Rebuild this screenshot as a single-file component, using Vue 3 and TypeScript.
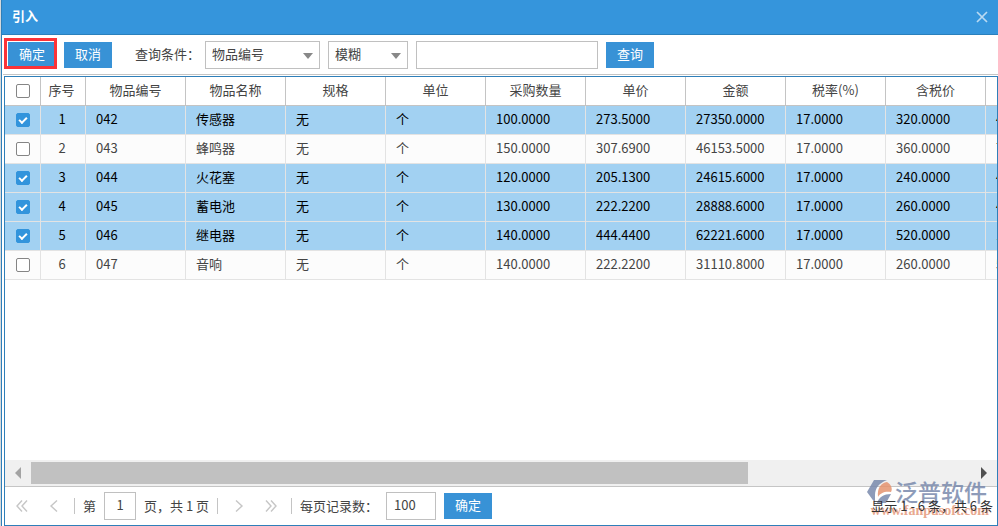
<script setup lang="ts">
import { computed, ref } from 'vue'

interface Item {
  code: string
  name: string
  spec: string
  unit: string
  qty: number
  price: number
  amount: number
  rate: number
  taxed: number
  checked: boolean
}

const make = (
  code: string, name: string, qty: number, price: number,
  amount: number, taxed: number, checked: boolean,
): Item => ({ code, name, spec: '无', unit: '个', qty, price, amount, rate: 17, taxed, checked })

const items = ref<Item[]>([
  make('042', '传感器', 100, 273.5, 27350, 320, true),
  make('043', '蜂鸣器', 150, 307.69, 46153.5, 360, false),
  make('044', '火花塞', 120, 205.13, 24615.6, 240, true),
  make('045', '蓄电池', 130, 222.22, 28888.6, 260, true),
  make('046', '继电器', 140, 444.44, 62221.6, 520, true),
  make('047', '音响', 140, 222.22, 31110.8, 260, false),
])

const headings = ['物品编号', '物品名称', '规格', '单位', '采购数量', '单价', '金额', '税率(%)', '含税价']
const field = ref('物品编号')
const mode = ref('模糊')
const keyword = ref('')
const page = ref('1')
const pageSize = ref('100')

const fixed = (n: number): string => n.toFixed(4)
const cells = (i: Item): string[] => [
  i.code, i.name, i.spec, i.unit, fixed(i.qty), fixed(i.price), fixed(i.amount),
  fixed(i.rate), fixed(i.taxed), fixed((i.amount * i.rate) / 100),
]

const all = computed({
  get: () => items.value.every((i) => i.checked),
  set: (v: boolean) => items.value.forEach((i) => { i.checked = v }),
})
</script>

<template>
  <div class="dialog">
    <header class="titlebar">
      <h1>引入</h1>
      <button class="icon close" type="button" aria-label="关闭">
        <svg width="12" height="12" viewBox="0 0 12 12"><path d="M1 1L11 11M11 1L1 11" /></svg>
      </button>
    </header>

    <form class="toolbar" @submit.prevent>
      <button class="btn marked" type="button">确定</button>
      <button class="btn" type="button">取消</button>
      <label class="query-label" for="field">查询条件：</label>
      <span class="select wide">
        <select id="field" v-model="field"><option>物品编号</option><option>物品名称</option></select>
      </span>
      <span class="select">
        <select v-model="mode" aria-label="匹配方式"><option>模糊</option><option>精确</option></select>
      </span>
      <input v-model="keyword" class="box keyword" type="text" aria-label="关键字">
      <button class="btn" type="submit">查询</button>
    </form>

    <main class="panel">
      <div class="grid">
        <table>
          <colgroup>
            <col class="c-check"><col class="c-index"><col v-for="n in 10" :key="n" class="c-data">
          </colgroup>
          <thead>
            <tr>
              <th class="check"><input v-model="all" type="checkbox" aria-label="全选"></th>
              <th class="index">序号</th>
              <th v-for="h in headings" :key="h">{{ h }}</th>
              <th></th>
            </tr>
          </thead>
          <tbody>
            <tr v-for="(item, i) in items" :key="item.code" :class="{ selected: item.checked }">
              <td class="check"><input v-model="item.checked" type="checkbox" :aria-label="item.name"></td>
              <td class="index">{{ i + 1 }}</td>
              <td v-for="(c, k) in cells(item)" :key="k">{{ c }}</td>
            </tr>
          </tbody>
        </table>
      </div>

      <div class="scrollbar">
        <span class="arrow"><svg width="6" height="12" viewBox="0 0 6 12"><path class="dim" d="M6 0V12L0 6Z" /></svg></span>
        <div class="track"><div class="thumb"></div></div>
        <span class="arrow"><svg width="6" height="12" viewBox="0 0 6 12"><path class="dark" d="M0 0V12L6 6Z" /></svg></span>
      </div>

      <footer class="pager">
        <button class="icon nav" type="button" aria-label="首页">
          <svg width="12" height="12" viewBox="0 0 12 12"><path d="M6 0.5L1 6L6 11.5M11 0.5L6 6L11 11.5" /></svg>
        </button>
        <button class="icon nav" type="button" aria-label="上一页">
          <svg width="12" height="12" viewBox="0 0 12 12"><path d="M9 0.5L3 6L9 11.5" /></svg>
        </button>
        <i class="sep"></i>
        <label class="txt" for="page">第</label>
        <input id="page" v-model="page" class="box page" type="text">
        <span class="txt">页，共 1 页</span>
        <i class="sep"></i>
        <button class="icon nav" type="button" aria-label="下一页">
          <svg width="12" height="12" viewBox="0 0 12 12"><path d="M3 0.5L9 6L3 11.5" /></svg>
        </button>
        <button class="icon nav" type="button" aria-label="末页">
          <svg width="12" height="12" viewBox="0 0 12 12"><path d="M1 0.5L6 6L1 11.5M6 0.5L11 6L6 11.5" /></svg>
        </button>
        <i class="sep"></i>
        <label class="txt size-label" for="size">每页记录数：</label>
        <input id="size" v-model="pageSize" class="box size" type="text">
        <button class="btn" type="button">确定</button>
        <span class="summary">显示 1 - 6 条，共 6 条</span>
      </footer>
    </main>

    <div class="watermark">
      <div class="brand">
        <svg width="26" height="24" viewBox="0 0 26 24">
          <path class="slate" d="M7 0H20C12 3 8 8 8 15C8 18 8 20 8 23L0 12Z" />
          <path class="coral" d="M11 17C10 8 14 3 20 2C24 4 26 9 24 12C18 11 13 13 11 17Z" />
          <path class="slate" d="M10 23C12 17 17 14 24 14L19 23Z" />
        </svg>
        <span>泛普软件</span>
      </div>
      <div class="site">www.fanpusoft.com</div>
    </div>
  </div>
</template>

<style>
body { background: #fff; }
</style>

<style scoped>
*, *::after { box-sizing: border-box; }
.dialog {
  position: relative;
  display: flex;
  flex-direction: column;
  height: 100vh;
  padding-left: 1px;
  border-left: 1px solid #d5d9dc;
  box-shadow: inset 1px 0 #2f7fb9;
  overflow: hidden;
  color: #444;
  font: 13px/20px "Noto Sans CJK SC", sans-serif;
}
button, input, select { margin: 0; font: inherit; color: inherit; }
.titlebar {
  display: flex;
  flex: none;
  align-items: center;
  justify-content: space-between;
  height: 35px;
  padding: 0 9px 2px 10px;
  border-bottom: 1px solid #2a80bc;
  background: #3595dc;
}
h1 { margin: 0; color: #fff; font-size: 13px; font-weight: 700; line-height: 20px; }
.icon {
  display: flex;
  align-items: center;
  justify-content: center;
  padding: 0;
  border: 0;
  background: none;
}
.icon path { fill: none; stroke: #c6c6c6; stroke-width: 1.4; }
.close { width: 14px; height: 20px; padding-top: 2px; }
.close path { stroke: #b9daf2; stroke-width: 1.7; }
.toolbar {
  display: flex;
  flex: none;
  align-items: center;
  gap: 8px;
  height: 40px;
  margin-left: 1px;
  padding: 0 5px;
  border-bottom: 1px solid #c5c5c5;
}
.btn {
  position: relative;
  flex: none;
  width: 48px;
  height: 26px;
  padding: 0 0 2px;
  border: 0;
  background: #3892d6;
  color: #fff;
}
.marked::after {
  content: "";
  position: absolute;
  inset: -4px -1px -1px -4px;
  border: 3px solid #fb3338;
}
.query-label { width: 62px; margin-left: 15px; padding-bottom: 2px; white-space: nowrap; }
.select { position: relative; flex: none; width: 80px; height: 28px; }
.wide { width: 115px; }
.select::after {
  content: "";
  position: absolute;
  top: 12px;
  right: 7px;
  border: 5px solid transparent;
  border-top: 6px solid #888;
  border-bottom: 0;
  pointer-events: none;
}
select, .box {
  height: 28px;
  border: 1px solid #c0c0c0;
  border-radius: 0;
  outline: 0;
  background: #fff;
}
select { width: 100%; padding: 0 6px 2px; appearance: none; }
.box { flex: none; padding: 0 7px 2px; }
.keyword { width: 182px; }
.panel {
  display: flex;
  flex: 1;
  flex-direction: column;
  min-height: 0;
  margin: 1px 0 0 2px;
  border: 1px solid #2f7fb9;
}
.grid { flex: 1; min-height: 0; overflow: hidden; }
table { width: 1081px; border-spacing: 0; table-layout: fixed; }
.c-check { width: 36px; }
.c-index { width: 45px; }
.c-data { width: 100px; }
th, td {
  height: 29px;
  padding: 0 10px 2px;
  border-right: 1px solid #e3e3e3;
  border-bottom: 1px solid #e3e3e3;
  font-weight: 400;
  text-align: left;
  white-space: nowrap;
}
th { padding: 0 0 2px; border-color: #c4c4c4; text-align: center; }
tbody tr { background: #fcfcfc; }
tbody .selected { background: #a2d1f2; color: #000; }
.index { padding: 0 3px 2px 0; text-align: center; }
td.index { padding-right: 2px; }
.check { padding: 0; text-align: center; }
.check input {
  display: block;
  width: 14px;
  height: 14px;
  margin: 0 auto;
  border: 1px solid #858585;
  border-radius: 2px;
  appearance: none;
  background: #fff;
}
.check input:checked { border-color: #3294dc; background: #3294dc; }
.check input:checked::after {
  content: "";
  display: block;
  width: 8px;
  height: 5px;
  margin: 3px 0 0 2px;
  border: solid #fff;
  border-width: 0 0 2px 2px;
  transform: rotate(-45deg);
}
.scrollbar { display: flex; flex: none; height: 26px; background: #f0f0f0; }
.arrow { display: flex; align-items: center; justify-content: center; width: 26px; }
.dim { fill: #a3a3a3; }
.dark { fill: #505050; }
.track { flex: 1; padding: 2px 0; }
.thumb { width: 76.3%; height: 22px; background: #c1c1c1; }
.pager {
  display: flex;
  flex: none;
  align-items: center;
  height: 39px;
  padding-left: 1px;
  border-top: 1px solid #c5c5c5;
  white-space: nowrap;
}
.pager .btn, .pager .box { margin-bottom: 1px; }
.nav { width: 32px; height: 26px; }
.sep { width: 1px; height: 16px; background: #c4c4c4; }
.nav + .sep { margin: 0 8px 0 4px; }
.txt + .sep { margin: 0 5px 0 8px; }
.page { width: 32px; margin: 0 8px; padding: 0 0 2px; text-align: center; }
.size-label { width: 78px; }
.size { width: 50px; margin: 0 8px; }
.summary {
  position: relative;
  z-index: 1;
  margin-left: auto;
  padding-right: 4px;
  color: #333;
}
.watermark {
  position: absolute;
  right: 9px;
  bottom: 8px;
  width: 122px;
  opacity: 0.85;
  pointer-events: none;
}
.brand {
  display: flex;
  align-items: center;
  gap: 2px;
  height: 24px;
  color: #7a8aad;
  font-size: 23px;
  font-weight: 500;
  line-height: 24px;
  white-space: nowrap;
}
.brand span { padding-bottom: 2px; }
.slate { fill: #7a8aad; }
.coral { fill: #e5936f; }
.site {
  color: #e69a7c;
  font: 700 14px/14px "Liberation Serif", serif;
  text-align: right;
}
</style>
